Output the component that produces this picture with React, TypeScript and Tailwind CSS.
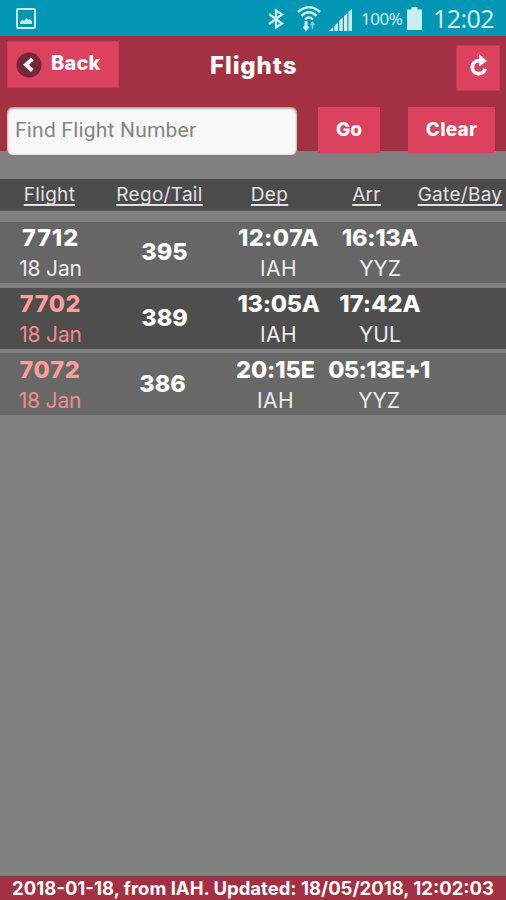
const flights = [
  {
    number: '7712', numberCls: 'text-white tracking-[0.9px]', date: 'text-[#ececec]', tail: '395',
    dep: '12:07A', depCls: 'tracking-[0.4px]', depPort: 'IAH',
    arr: '16:13A', arrCls: 'tracking-[-0.3px]', arrPort: 'YYZ',
    row: 'h-[61px] mt-[11px] bg-[#666666]', cols: 'grid-cols-[101px_127px_101px_102px_75px]',
  },
  {
    number: '7702', numberCls: 'text-[#ff9c9c] tracking-[0.6px]', date: 'text-[#f08c8c]', tail: '389',
    dep: '13:05A', depCls: 'tracking-[-0.3px]', depPort: 'IAH',
    arr: '17:42A', arrCls: 'tracking-[0.1px]', arrPort: 'YUL',
    row: 'h-[61px] mt-[5px] bg-[#4e4e4e]', cols: 'grid-cols-[101px_127px_101px_102px_75px]',
  },
  {
    number: '7072', numberCls: 'text-[#ff9c9c] tracking-[0.8px]', date: 'text-[#f08c8c]', tail: '386',
    dep: '20:15E', depCls: 'tracking-[-0.1px]', depPort: 'IAH',
    arr: '05:13E+1', arrCls: 'tracking-[-0.6px]', arrPort: 'YYZ',
    row: 'h-[62px] mt-[4px] pt-px bg-[#686868]', cols: 'grid-cols-[100px_125px_101px_106px_74px]',
  },
];

function StatusBar() {
  return (
    <div className="flex h-9 shrink-0 items-center bg-[#0096b4] text-[#c9eef5]">
      <svg className="ml-4 h-[21px] w-5" viewBox="0 0 20 21" fill="none">
        <rect x="1" y="1" width="18" height="19" rx="1" stroke="currentColor" strokeWidth="2" />
        <path d="M4 16v-2l2.500-2.500 1.500 1.500 2.500-3 2 2 1.500-1 2 2.500v2.500z" fill="currentColor" />
      </svg>
      <svg className="mt-[2px] ml-[232px] h-[22px] w-4" viewBox="0 0 16 22" fill="none" stroke="currentColor" strokeWidth="2.300">
        <path d="M1 6L14 15.500 8 19.500v-17l6 4L1 16" />
      </svg>
      <svg className="ml-[13px] h-[27px] w-6" viewBox="0 0 24 27" fill="none" stroke="currentColor" strokeWidth="2.400">
        <path d="M1 7Q12-2.500 23 7M4.500 10.800Q12 3.500 19.500 10.800M8 14.500q4-4 8 0" />
        <path d="M9 16v8" strokeWidth="3" />
        <path d="M6.500 21.500L9 24.500l2.500-3" />
        <path d="M15.500 24v-6M13.500 20l2-2.500 2 2.500" strokeWidth="1.500" opacity=".65" />
      </svg>
      <svg className="mt-[3px] ml-[8px] h-[22px] w-[23px]" viewBox="0 0 23 22" fill="currentColor">
        <path d="M0 22l4.300-4v4zM5.500 16.500l3.500-3V22H5.500zM10.300 11.500l3.500-3V22h-3.500zM15 7l3.300-3v18H15zM19.500 2.500L23 0v22h-3.500z" />
      </svg>
      <span className="mt-[2px] ml-[9px] w-[43px] font-['Noto_Sans',sans-serif] text-[17px] leading-5 tracking-[-0.5px] whitespace-nowrap">100%</span>
      <svg className="mt-px ml-[3px] h-[23px] w-[15px]" viewBox="0 0 15 23" fill="currentColor">
        <path d="M4.500 0h6v2.500H15V23H0V2.500h4.500z" />
      </svg>
      <span className="ml-[11px] font-['Noto_Sans',sans-serif] text-[25px] leading-7 tracking-[-0.6px] whitespace-nowrap">12:02</span>
    </div>
  );
}

function Header() {
  return (
    <header className="h-[115px] shrink-0 bg-[#a43043] text-white">
      <div className="flex items-start pt-[5px] pl-[7px]">
        <button className="flex h-[47px] w-[112px] items-center border border-[#c83c55] bg-[#dc415e] pl-2">
          <svg className="h-[26px] w-[26px]" viewBox="0 0 26 26" fill="none">
            <circle cx="13" cy="13" r="12.500" fill="#752638" />
            <path d="M16.300 7L10 12.800l6.300 5.800" stroke="#fff" strokeWidth="4" />
          </svg>
          <span className="-mt-1 ml-[9px] text-[20px] font-extrabold leading-6 tracking-[0.2px]">Back</span>
        </button>
        <h1 className="mt-[11px] ml-[91px] w-[90px] text-[24px] font-extrabold leading-7 tracking-[0.9px] whitespace-nowrap">Flights</h1>
        <button className="mt-1 ml-[156px] flex h-[46px] w-11 items-center justify-center border border-[#c83c55] bg-[#dc415e]" aria-label="Refresh">
          <svg className="-mt-[5px] h-[23px] w-[19px]" viewBox="0 0 19 23" fill="none">
            <path d="M12 6.700H9.500a6.500 6.500 0 1 0 6.600 8" stroke="#fff" strokeWidth="3.800" />
            <path d="M10 0l8 7-8 5.500z" fill="#fff" />
          </svg>
        </button>
      </div>
      <div className="mt-[16px] flex items-start pl-[7px]">
        <input
          className="h-12 w-[290px] rounded-[6px] bg-[#f8f8f8] px-2 pb-[3px] font-[Roboto,sans-serif] text-[21px] tracking-[0.2px] shadow-[inset_0_1px_3px_#777] outline-none placeholder:text-[#858585]"
          placeholder="Find Flight Number"
        />
        <button className="ml-[21px] h-[46px] w-[62px] bg-[#dc415e] text-[19px] font-extrabold">Go</button>
        <button className="ml-7 h-[46px] w-[87px] bg-[#dc415e] text-[19px] font-extrabold tracking-[0.2px]">Clear</button>
      </div>
    </header>
  );
}

const headings = ['Flight', 'Rego/Tail', 'Dep', 'Arr', 'Gate/Bay'];

export default function App() {
  return (
    <div className="flex h-[900px] w-[506px] flex-col overflow-hidden bg-[#808080] font-[Inter,sans-serif]">
      <StatusBar />
      <Header />
      <main className="flex-1 pt-7">
        <div className="grid h-8 grid-cols-[99px_121px_99px_95px_92px] border-b border-[#5c5c5c] bg-[#4b4b4b] text-center text-[19px] leading-[31px] tracking-[0.3px] text-[#e2e2e2]">
          {headings.map((heading) => (
            <span key={heading} className="whitespace-nowrap underline decoration-[1.5px] underline-offset-[3px] [text-decoration-skip-ink:none]">{heading}</span>
          ))}
        </div>
        {flights.map((f) => (
          <div key={f.number} className={`grid text-center text-[23.500px] font-extrabold text-white ${f.row} ${f.cols}`}>
            <div className="flex flex-col">
              <span className={`mt-[1px] h-[30px] leading-[30px] ${f.numberCls}`}>{f.number}</span>
              <span className={`h-[30px] text-[21px] font-normal leading-[31px] tracking-[-0.2px] ${f.date}`}>18 Jan</span>
            </div>
            <span className="leading-[60px]">{f.tail}</span>
            <div className="flex flex-col">
              <span className={`mt-[1px] h-[30px] leading-[30px] whitespace-nowrap ${f.depCls}`}>{f.dep}</span>
              <span className="h-[30px] text-[21px] font-normal leading-[31px] tracking-[0.4px] text-[#ececec]">{f.depPort}</span>
            </div>
            <div className="flex flex-col">
              <span className={`mt-[1px] h-[30px] leading-[30px] whitespace-nowrap ${f.arrCls}`}>{f.arr}</span>
              <span className="h-[30px] text-[21px] font-normal leading-[31px] text-[#ececec]">{f.arrPort}</span>
            </div>
          </div>
        ))}
      </main>
      <footer className="h-6 shrink-0 border-t border-[#7f3b48] bg-[#a43043] text-center text-[18.500px] font-bold leading-[22px] whitespace-nowrap text-white">
        2018-01-18, from IAH. Updated: 18/05/2018, 12:02:03
      </footer>
    </div>
  );
}
